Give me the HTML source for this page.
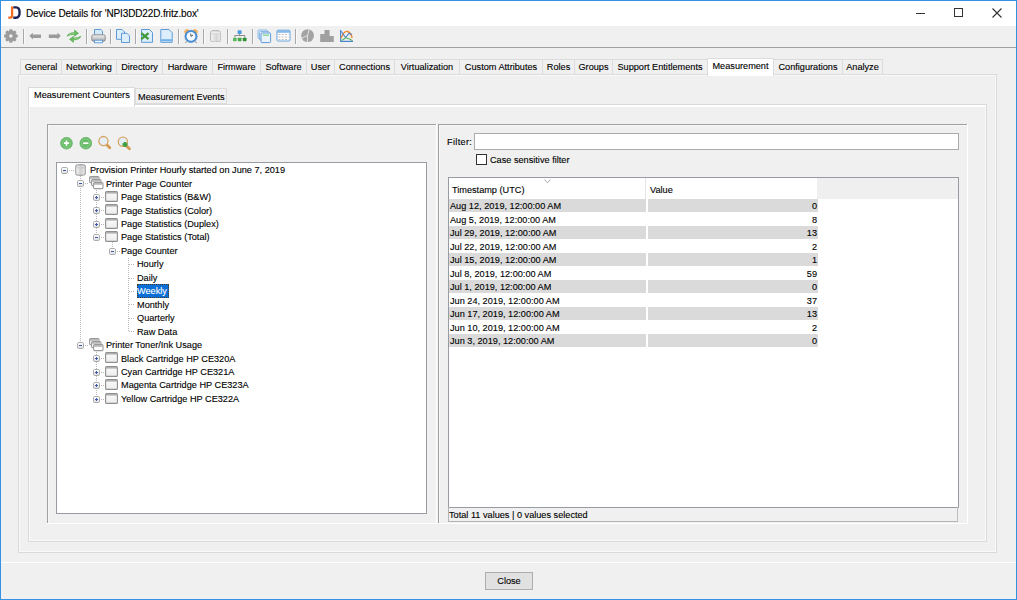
<!DOCTYPE html>
<html><head><meta charset="utf-8"><style>
html,body{margin:0;padding:0;}
body{width:1017px;height:600px;position:relative;overflow:hidden;background:#f0f0f0;font-family:"Liberation Sans", sans-serif;}
div,span,svg{position:absolute;box-sizing:border-box;}
.t{font-size:9.6px;letter-spacing:0px;transform:scaleX(0.955);transform-origin:0 0;line-height:12px;height:12px;white-space:pre;color:#000;-webkit-text-stroke:0.12px;}
.hl{background:#fff;}
.c{transform-origin:50% 0 !important;}
.r{transform-origin:100% 0 !important;}
</style></head><body>

<div style="left:0;top:0;width:1017px;height:600px;border:1px solid #3392e2;"></div>
<div style="left:1px;top:1px;width:1015px;height:25px;background:#fff;"></div>
<svg style="left:7px;top:5px" width="15" height="15" viewBox="0 0 15 15">
<path d="M5.1 1.5 L5.1 10.8 Q5.1 12.6 3.2 12.6 L1.3 12.6" stroke="#f56d1f" stroke-width="2.3" fill="none"/>
<path d="M6.3 2.4 L9 2.4 Q12.6 2.4 12.6 7.6 Q12.6 12.8 9 12.8 L6.3 12.8" stroke="#1c2556" stroke-width="2.4" fill="none"/>
</svg>
<div class="t" style="left:26px;top:8px;font-size:10px;letter-spacing:-0.13px;color:#000;transform:none;">Device Details for 'NPI3DD22D.fritz.box'</div>
<div style="left:916px;top:13px;width:9px;height:1px;background:#333;"></div>
<div style="left:954px;top:8px;width:9px;height:9px;border:1px solid #333;"></div>
<svg style="left:992px;top:8px" width="10" height="10" viewBox="0 0 10 10"><path d="M0.5 0.5 L9.5 9.5 M9.5 0.5 L0.5 9.5" stroke="#333" stroke-width="1.1"/></svg>
<div style="left:1px;top:47px;width:1015px;height:1px;background:#a0a0a0;"></div>
<div style="left:23px;top:29px;width:1px;height:15px;background:#a8a8a8;"></div>
<div style="left:24px;top:29px;width:1px;height:15px;background:#fafafa;"></div>
<div style="left:86px;top:29px;width:1px;height:15px;background:#a8a8a8;"></div>
<div style="left:87px;top:29px;width:1px;height:15px;background:#fafafa;"></div>
<div style="left:110px;top:29px;width:1px;height:15px;background:#a8a8a8;"></div>
<div style="left:111px;top:29px;width:1px;height:15px;background:#fafafa;"></div>
<div style="left:135px;top:29px;width:1px;height:15px;background:#a8a8a8;"></div>
<div style="left:136px;top:29px;width:1px;height:15px;background:#fafafa;"></div>
<div style="left:178px;top:29px;width:1px;height:15px;background:#a8a8a8;"></div>
<div style="left:179px;top:29px;width:1px;height:15px;background:#fafafa;"></div>
<div style="left:203px;top:29px;width:1px;height:15px;background:#a8a8a8;"></div>
<div style="left:204px;top:29px;width:1px;height:15px;background:#fafafa;"></div>
<div style="left:227px;top:29px;width:1px;height:15px;background:#a8a8a8;"></div>
<div style="left:228px;top:29px;width:1px;height:15px;background:#fafafa;"></div>
<div style="left:252px;top:29px;width:1px;height:15px;background:#a8a8a8;"></div>
<div style="left:253px;top:29px;width:1px;height:15px;background:#fafafa;"></div>
<div style="left:295px;top:29px;width:1px;height:15px;background:#a8a8a8;"></div>
<div style="left:296px;top:29px;width:1px;height:15px;background:#fafafa;"></div>
<svg style="left:3px;top:27.7px" width="16" height="16" viewBox="-8 -8 16 16"><g transform="translate(-0.1,0)"><rect x="-1.7" y="-6.8" width="3.4" height="3.6" rx="1.3" transform="rotate(0)" fill="#9b9b9b"/><rect x="-1.7" y="-6.8" width="3.4" height="3.6" rx="1.3" transform="rotate(45)" fill="#9b9b9b"/><rect x="-1.7" y="-6.8" width="3.4" height="3.6" rx="1.3" transform="rotate(90)" fill="#9b9b9b"/><rect x="-1.7" y="-6.8" width="3.4" height="3.6" rx="1.3" transform="rotate(135)" fill="#9b9b9b"/><rect x="-1.7" y="-6.8" width="3.4" height="3.6" rx="1.3" transform="rotate(180)" fill="#9b9b9b"/><rect x="-1.7" y="-6.8" width="3.4" height="3.6" rx="1.3" transform="rotate(225)" fill="#9b9b9b"/><rect x="-1.7" y="-6.8" width="3.4" height="3.6" rx="1.3" transform="rotate(270)" fill="#9b9b9b"/><rect x="-1.7" y="-6.8" width="3.4" height="3.6" rx="1.3" transform="rotate(315)" fill="#9b9b9b"/><circle r="5.1" fill="#9b9b9b"/><circle r="1.7" fill="#f0f0f0"/></g></svg>
<svg style="left:28px;top:31px" width="15" height="10" viewBox="0 0 15 10"><path d="M1.4 4.8 L4.8 1.8 L4.8 3.4 L13 3.4 L13 6.9 L4.8 6.9 L4.8 8.4 Z" fill="#9b9b9b"/></svg>
<svg style="left:47px;top:31px" width="15" height="10" viewBox="0 0 15 10"><path d="M13.8 4.8 L10.4 1.8 L10.4 3.4 L1.8 3.4 L1.8 6.9 L10.4 6.9 L10.4 8.4 Z" fill="#9b9b9b"/></svg>
<svg style="left:66px;top:29px" width="16" height="15" viewBox="0 0 16 15">
<path d="M1 7.2 Q2.5 3.6 8.5 3.6 L8.5 1 L12.6 4.3 L8.5 7.3 L8.5 5.4 Q4.5 5.3 1 7.2 Z" fill="#66b95c" stroke="#4ea64a" stroke-width="0.5"/>
<path d="M15 7.3 Q13.5 10.9 7.5 10.9 L7.5 13.5 L3.4 10.2 L7.5 7.2 L7.5 9.1 Q11.5 9.2 15 7.3 Z" fill="#66b95c" stroke="#4ea64a" stroke-width="0.5"/>
<path d="M3 5.8 Q5 4.5 8.5 4.5 M13 8.7 Q11 10 7.5 10" stroke="#a8dba0" stroke-width="0.6" fill="none"/>
</svg>
<svg style="left:91px;top:28px" width="15" height="16" viewBox="0 0 15 16">
<defs><linearGradient id="prg" x1="0" y1="0" x2="0" y2="1"><stop offset="0" stop-color="#f0f0f0"/><stop offset="0.55" stop-color="#cdcdcd"/><stop offset="1" stop-color="#9a9a9a"/></linearGradient></defs>
<path d="M3.5 7 V1.5 H9.8 L11.5 3.2 V7" fill="#d4e9fa" stroke="#5d9ad6" stroke-width="1"/>
<rect x="0.8" y="6.8" width="13.4" height="6.4" rx="1.6" fill="url(#prg)" stroke="#7a7a7a" stroke-width="0.8"/>
<rect x="3.5" y="12.2" width="8" height="2.6" fill="#e9f3fb" stroke="#5d9ad6" stroke-width="0.9"/>
</svg>
<svg style="left:115px;top:28px" width="16" height="16" viewBox="0 0 16 16">
<path d="M1.5 1.5 H7 L9.5 4 V11.3 H1.5 Z" fill="#dcedfb" stroke="#5d9ad6" stroke-width="1"/>
<path d="M6.5 5.3 H12 L14.5 7.8 V14.5 H6.5 Z" fill="#dcedfb" stroke="#5d9ad6" stroke-width="1"/>
</svg>
<svg style="left:140px;top:28px" width="14" height="16" viewBox="0 0 14 16">
<path d="M1.5 1.5 H9.5 L12.5 4.5 V14.3 H1.5 Z" fill="#dcedfb" stroke="#5d9ad6" stroke-width="1"/>
<path d="M1.3 5.2 L8.5 11.2 M8.5 5.2 L1.3 11.2" stroke="#3f9a3a" stroke-width="2.2"/>
</svg>
<svg style="left:159px;top:28px" width="15" height="16" viewBox="0 0 15 16">
<path d="M1.8 1.5 H10 L13.2 4.7 V14.3 H1.8 Z" fill="#dcedfb" stroke="#5d9ad6" stroke-width="1"/>
<rect x="2.3" y="11.2" width="10.4" height="2" fill="#6fb0ea"/>
</svg>
<svg style="left:183px;top:28px" width="16" height="16" viewBox="0 0 16 16">
<ellipse cx="3.6" cy="3.4" rx="2.6" ry="2.1" transform="rotate(-35 3.6 3.4)" fill="#f0b060"/>
<ellipse cx="12.4" cy="3.4" rx="2.6" ry="2.1" transform="rotate(35 12.4 3.4)" fill="#f0b060"/>
<path d="M3.5 13.5 L2.5 15 M12.5 13.5 L13.5 15" stroke="#999" stroke-width="1.2"/>
<circle cx="8" cy="8.4" r="6.1" fill="#4a90d9" stroke="#3a78c0" stroke-width="0.6"/>
<circle cx="8" cy="8.4" r="4.4" fill="#f4f9ff"/>
<path d="M8 8.4 L7.6 5.6 M8 8.4 L10 7" stroke="#444" stroke-width="0.9"/>
</svg>
<svg style="left:209.6px;top:29.8px" width="11.2" height="12.6" viewBox="0.7 0.9 11.6 13.2" preserveAspectRatio="none">
<defs><linearGradient id="tdb" x1="0" y1="0" x2="1" y2="0"><stop offset="0" stop-color="#f4f4f4"/><stop offset="0.6" stop-color="#d6d6d6"/><stop offset="1" stop-color="#ededed"/></linearGradient></defs>
<path d="M1.2 3.2 Q1.2 1.3 6.5 1.3 Q11.8 1.3 11.8 3.2 V11.8 Q11.8 13.7 6.5 13.7 Q1.2 13.7 1.2 11.8 Z" fill="url(#tdb)" stroke="#b4b4b4" stroke-width="1"/>
<path d="M1.5 3.4 Q1.5 5 6.5 5 Q11.5 5 11.5 3.4" fill="#fafafa" stroke="#c8c8c8" stroke-width="0.8"/>
</svg>
<svg style="left:231px;top:29px" width="17" height="14" viewBox="0 0 17 14">
<rect x="6.6" y="1.2" width="4" height="3.8" rx="0.8" fill="#4a9ae0"/>
<path d="M8.6 5 V6.5 M3.8 8.5 V6.5 H13.8 V8.5" stroke="#8a8a8a" stroke-width="1" fill="none"/>
<rect x="2" y="8.7" width="3.7" height="3.5" rx="0.6" fill="#5cb85c"/>
<rect x="6.8" y="8.7" width="3.7" height="3.5" rx="0.6" fill="#4aa84a"/>
<rect x="11.8" y="8.7" width="3.7" height="3.5" rx="0.6" fill="#2f8f35"/>
</svg>
<svg style="left:257px;top:29px" width="15" height="15" viewBox="0 0 15 15">
<rect x="1" y="1" width="9.5" height="8.5" rx="1" fill="#e4f0fb" stroke="#7fb0e0" stroke-width="0.9"/>
<rect x="2.5" y="2.5" width="9.5" height="8.5" rx="1" fill="#e4f0fb" stroke="#7fb0e0" stroke-width="0.9"/>
<rect x="4" y="4" width="9.6" height="9.6" rx="1" fill="#e9f3fc" stroke="#5d9ad6" stroke-width="1"/>
<rect x="5.8" y="5.6" width="6.2" height="1.2" fill="#7ed07e"/>
</svg>
<svg style="left:276px;top:29px" width="15" height="13" viewBox="0 0 15 13">
<rect x="1" y="1.2" width="13" height="10.8" rx="1" fill="#fff" stroke="#6aa3dc" stroke-width="1"/>
<rect x="1" y="1.2" width="13" height="2.6" fill="#86b9e8"/>
<path d="M2.5 5.5H12.5M2.5 8H12.5M2.5 10.5H12.5" stroke="#c0c0c0" stroke-width="1" stroke-dasharray="2 1.2"/>
</svg>
<svg style="left:300px;top:28px" width="16" height="16" viewBox="0 0 16 16">
<circle cx="7.6" cy="7.6" r="6.4" fill="#a3a3a3"/>
<path d="M7.6 7.6 L9.2 1 M7.6 7.6 L1.6 10.2 M7.6 7.6 L7.4 14.2" stroke="#f0f0f0" stroke-width="0.8"/>
</svg>
<svg style="left:319px;top:29px" width="16" height="14" viewBox="0 0 16 14">
<path d="M1.2 5 H5.5 V1 H10.6 V7 H14.8 V13 H1.2 Z" fill="#a0a0a0"/>
</svg>
<svg style="left:339px;top:29px" width="15" height="14" viewBox="0 0 15 14">
<path d="M1.6 1 V12.4 H14" stroke="#4a86d0" stroke-width="1.1" fill="none"/>
<path d="M2.2 9 Q5 1.5 8.5 2.5 Q12 3.5 13.2 9" stroke="#f08a30" stroke-width="1.4" fill="none"/>
<path d="M2 2 L6.5 8.5 L10 4.5 L13 5.5" stroke="#4a86d0" stroke-width="1.1" fill="none"/>
<path d="M2.5 11.5 L7 8.8 L11 10.2 L13.5 11.8" stroke="#5cb05c" stroke-width="1.1" fill="none"/>
</svg>
<svg style="left:60px;top:137px" width="13" height="13" viewBox="0 0 13 13">
<circle cx="6.5" cy="6.2" r="5.9" fill="#6abc6a" stroke="#58a858" stroke-width="0.6"/>
<circle cx="6.5" cy="6.2" r="4.3" fill="none" stroke="#8fd08f" stroke-width="0.7"/>
<path d="M6.5 3.6V8.8M3.9 6.2H9.1" stroke="#fff" stroke-width="1.7"/>
</svg>
<svg style="left:79px;top:137px" width="13" height="13" viewBox="0 0 13 13">
<circle cx="6.8" cy="6.2" r="5.9" fill="#6abc6a" stroke="#58a858" stroke-width="0.6"/>
<circle cx="6.8" cy="6.2" r="4.3" fill="none" stroke="#8fd08f" stroke-width="0.7"/>
<path d="M4.2 6.2H9.4" stroke="#fff" stroke-width="1.7"/>
</svg>
<svg style="left:97px;top:135px" width="15" height="15" viewBox="0 0 15 15">
<path d="M9.5 9.5 L12.8 12.8" stroke="#d49a50" stroke-width="2.8" stroke-linecap="round"/>
<circle cx="6.4" cy="6.1" r="4.6" fill="#e3eef6" stroke="#d8a462" stroke-width="1.3"/>
</svg>
<svg style="left:116px;top:135px" width="16" height="16" viewBox="0 0 16 16">
<path d="M10 10.5 L13.4 13.8" stroke="#d49a50" stroke-width="2.8" stroke-linecap="round"/>
<circle cx="6.9" cy="6.8" r="4.6" fill="#e3eef6" stroke="#d8a462" stroke-width="1.3"/>
<path d="M9 7 V12 M6.5 9.5 H11.5" stroke="#3f9f3f" stroke-width="2.6"/>
</svg>
<div style="left:18px;top:74px;width:979px;height:479px;border:1px solid #dadada;box-shadow:inset 0 0 0 1px #f9f9f9;"></div>
<div style="left:20px;top:59px;width:42px;height:16px;background:#f0f0f0;border:1px solid #dcdcdc;"></div>
<div class="t c" style="left:20px;top:61px;width:42px;text-align:center;">General</div>
<div style="left:61px;top:59px;width:56px;height:16px;background:#f0f0f0;border:1px solid #dcdcdc;"></div>
<div class="t c" style="left:61px;top:61px;width:56px;text-align:center;">Networking</div>
<div style="left:116px;top:59px;width:47px;height:16px;background:#f0f0f0;border:1px solid #dcdcdc;"></div>
<div class="t c" style="left:116px;top:61px;width:47px;text-align:center;">Directory</div>
<div style="left:162px;top:59px;width:51px;height:16px;background:#f0f0f0;border:1px solid #dcdcdc;"></div>
<div class="t c" style="left:162px;top:61px;width:51px;text-align:center;">Hardware</div>
<div style="left:212px;top:59px;width:49px;height:16px;background:#f0f0f0;border:1px solid #dcdcdc;"></div>
<div class="t c" style="left:212px;top:61px;width:49px;text-align:center;">Firmware</div>
<div style="left:260px;top:59px;width:47px;height:16px;background:#f0f0f0;border:1px solid #dcdcdc;"></div>
<div class="t c" style="left:260px;top:61px;width:47px;text-align:center;">Software</div>
<div style="left:306px;top:59px;width:29px;height:16px;background:#f0f0f0;border:1px solid #dcdcdc;"></div>
<div class="t c" style="left:306px;top:61px;width:29px;text-align:center;">User</div>
<div style="left:334px;top:59px;width:61px;height:16px;background:#f0f0f0;border:1px solid #dcdcdc;"></div>
<div class="t c" style="left:334px;top:61px;width:61px;text-align:center;">Connections</div>
<div style="left:394px;top:59px;width:66px;height:16px;background:#f0f0f0;border:1px solid #dcdcdc;"></div>
<div class="t c" style="left:394px;top:61px;width:66px;text-align:center;">Virtualization</div>
<div style="left:459px;top:59px;width:84px;height:16px;background:#f0f0f0;border:1px solid #dcdcdc;"></div>
<div class="t c" style="left:459px;top:61px;width:84px;text-align:center;">Custom Attributes</div>
<div style="left:542px;top:59px;width:33px;height:16px;background:#f0f0f0;border:1px solid #dcdcdc;"></div>
<div class="t c" style="left:542px;top:61px;width:33px;text-align:center;">Roles</div>
<div style="left:574px;top:59px;width:39px;height:16px;background:#f0f0f0;border:1px solid #dcdcdc;"></div>
<div class="t c" style="left:574px;top:61px;width:39px;text-align:center;">Groups</div>
<div style="left:612px;top:59px;width:96px;height:16px;background:#f0f0f0;border:1px solid #dcdcdc;"></div>
<div class="t c" style="left:612px;top:61px;width:96px;text-align:center;">Support Entitlements</div>
<div style="left:707px;top:58px;width:67px;height:18px;background:#fff;border:1px solid #dcdcdc;border-bottom:none;"></div>
<div class="t c" style="left:707px;top:60px;width:67px;text-align:center;">Measurement</div>
<div style="left:773px;top:59px;width:70px;height:16px;background:#f0f0f0;border:1px solid #dcdcdc;"></div>
<div class="t c" style="left:773px;top:61px;width:70px;text-align:center;">Configurations</div>
<div style="left:842px;top:59px;width:41px;height:16px;background:#f0f0f0;border:1px solid #dcdcdc;"></div>
<div class="t c" style="left:842px;top:61px;width:41px;text-align:center;">Analyze</div>
<div style="left:28px;top:104px;width:959px;height:438px;border:1px solid #dadada;box-shadow:inset 0 0 0 1px #f9f9f9;"></div>
<div style="left:29px;top:105px;width:956px;height:2px;background:#fff;"></div>
<div style="left:28px;top:87px;width:107px;height:20px;background:#fff;border:1px solid #dadada;border-bottom:none;"></div>
<div class="t" style="left:34px;top:89px;">Measurement Counters</div>
<div style="left:135px;top:88px;width:92px;height:16px;background:#f0f0f0;border:1px solid #dcdcdc;"></div>
<div class="t" style="left:138px;top:91px;">Measurement Events</div>
<div style="left:47px;top:124px;width:389px;height:399px;border-top:1px solid #a0a0a0;border-left:1px solid #a0a0a0;"></div>
<div style="left:48px;top:125px;width:388px;height:1px;background:#f7f7f7;"></div>
<div style="left:48px;top:125px;width:1px;height:397px;background:#f7f7f7;"></div>
<div style="left:47px;top:523px;width:390px;height:1px;background:#fff;"></div>
<div style="left:436px;top:124px;width:1px;height:400px;background:#fff;"></div>
<div style="left:438px;top:124px;width:530px;height:399px;border-top:1px solid #a0a0a0;border-left:1px solid #a0a0a0;"></div>
<div style="left:439px;top:125px;width:528px;height:1px;background:#f7f7f7;"></div>
<div style="left:439px;top:125px;width:1px;height:397px;background:#f7f7f7;"></div>
<div style="left:438px;top:523px;width:530px;height:1px;background:#fff;"></div>
<div style="left:967px;top:124px;width:1px;height:400px;background:#fff;"></div>
<div style="left:56px;top:162px;width:371px;height:352px;background:#fff;border:1px solid #989ba1;"></div>
<svg style="left:0;top:0" width="0" height="0"><defs>
<linearGradient id="egr" x1="0" y1="0" x2="0" y2="1"><stop offset="0" stop-color="#ffffff"/><stop offset="1" stop-color="#dcdcdc"/></linearGradient>
<linearGradient id="dbg" x1="0" y1="0" x2="1" y2="0"><stop offset="0" stop-color="#f6f6f6"/><stop offset="0.55" stop-color="#cfcfcf"/><stop offset="1" stop-color="#ececec"/></linearGradient>
<linearGradient id="wng" x1="0" y1="0" x2="0" y2="1"><stop offset="0" stop-color="#fbfbfb"/><stop offset="1" stop-color="#ececec"/></linearGradient>
</defs></svg>
<div style="left:80px;top:176px;width:1px;height:169px;background-image:linear-gradient(to bottom,#bababa 50%,transparent 50%);background-size:1px 2px;"></div>
<div style="left:96px;top:190px;width:1px;height:47px;background-image:linear-gradient(to bottom,#bababa 50%,transparent 50%);background-size:1px 2px;"></div>
<div style="left:112px;top:242px;width:1px;height:6px;background-image:linear-gradient(to bottom,#bababa 50%,transparent 50%);background-size:1px 2px;"></div>
<div style="left:128px;top:258px;width:1px;height:74px;background-image:linear-gradient(to bottom,#bababa 50%,transparent 50%);background-size:1px 2px;"></div>
<div style="left:96px;top:352px;width:1px;height:47px;background-image:linear-gradient(to bottom,#bababa 50%,transparent 50%);background-size:1px 2px;"></div>
<div style="left:69px;top:170px;width:6px;height:1px;background-image:linear-gradient(to right,#bababa 50%,transparent 50%);background-size:2px 1px;"></div>
<svg style="left:61px;top:167px" width="7" height="7" viewBox="0 0 7 7"><rect x="0.5" y="0.5" width="6" height="6" rx="1.2" fill="url(#egr)" stroke="#acacac" stroke-width="1"/><path d="M2 3.5H5" stroke="#3d5aa8" stroke-width="1"/></svg>
<svg style="left:75px;top:164px" width="11" height="12" viewBox="0 0 11 12"><path d="M0.7 2.4 Q0.7 0.6 5.5 0.6 Q10.3 0.6 10.3 2.4 V9.6 Q10.3 11.4 5.5 11.4 Q0.7 11.4 0.7 9.6 Z" fill="url(#dbg)" stroke="#a0a0a0" stroke-width="1.1"/><path d="M1 2.6 Q1 4 5.5 4 Q10 4 10 2.6" fill="none" stroke="#c4c4c4" stroke-width="0.9"/></svg>
<div class="t" style="left:89.5px;top:163.5px;">Provision Printer Hourly started on June 7, 2019</div>
<div style="left:85px;top:183px;width:4px;height:1px;background-image:linear-gradient(to right,#bababa 50%,transparent 50%);background-size:2px 1px;"></div>
<svg style="left:77px;top:180px" width="7" height="7" viewBox="0 0 7 7"><rect x="0.5" y="0.5" width="6" height="6" rx="1.2" fill="url(#egr)" stroke="#acacac" stroke-width="1"/><path d="M2 3.5H5" stroke="#3d5aa8" stroke-width="1"/></svg>
<svg style="left:89px;top:176px" width="15" height="14" viewBox="0 0 15 14"><rect x="0.6" y="0.6" width="9.4" height="6" rx="1" fill="#fff" stroke="#9a9a9a" stroke-width="1.1"/><rect x="1" y="1" width="8.6" height="1.8" fill="#b8b8b8"/><rect x="2.6" y="3.6" width="9.4" height="6" rx="1" fill="#fff" stroke="#9a9a9a" stroke-width="1.1"/><rect x="3" y="4" width="8.6" height="1.8" fill="#b8b8b8"/><rect x="4.6" y="6.6" width="9.4" height="6" rx="1" fill="#fff" stroke="#9a9a9a" stroke-width="1.1"/><rect x="5" y="7" width="8.6" height="1.8" fill="#b8b8b8"/></svg>
<div class="t" style="left:105.5px;top:177.5px;">Printer Page Counter</div>
<div style="left:101px;top:197px;width:4px;height:1px;background-image:linear-gradient(to right,#bababa 50%,transparent 50%);background-size:2px 1px;"></div>
<svg style="left:93px;top:194px" width="7" height="7" viewBox="0 0 7 7"><rect x="0.5" y="0.5" width="6" height="6" rx="1.2" fill="url(#egr)" stroke="#acacac" stroke-width="1"/><path d="M2 3.5H5M3.5 2V5" stroke="#3d5aa8" stroke-width="1"/></svg>
<svg style="left:105px;top:191px" width="13" height="11" viewBox="0 0 13 11"><rect x="0.6" y="0.6" width="11.8" height="9.8" rx="1" fill="url(#wng)" stroke="#8f8f8f" stroke-width="1.1"/><rect x="1" y="1" width="11" height="1.6" fill="#b0b0b0"/></svg>
<div class="t" style="left:121.3px;top:190.5px;">Page Statistics (B&amp;W)</div>
<div style="left:101px;top:210px;width:4px;height:1px;background-image:linear-gradient(to right,#bababa 50%,transparent 50%);background-size:2px 1px;"></div>
<svg style="left:93px;top:207px" width="7" height="7" viewBox="0 0 7 7"><rect x="0.5" y="0.5" width="6" height="6" rx="1.2" fill="url(#egr)" stroke="#acacac" stroke-width="1"/><path d="M2 3.5H5M3.5 2V5" stroke="#3d5aa8" stroke-width="1"/></svg>
<svg style="left:105px;top:204px" width="13" height="11" viewBox="0 0 13 11"><rect x="0.6" y="0.6" width="11.8" height="9.8" rx="1" fill="url(#wng)" stroke="#8f8f8f" stroke-width="1.1"/><rect x="1" y="1" width="11" height="1.6" fill="#b0b0b0"/></svg>
<div class="t" style="left:121.3px;top:204.5px;">Page Statistics (Color)</div>
<div style="left:101px;top:224px;width:4px;height:1px;background-image:linear-gradient(to right,#bababa 50%,transparent 50%);background-size:2px 1px;"></div>
<svg style="left:93px;top:221px" width="7" height="7" viewBox="0 0 7 7"><rect x="0.5" y="0.5" width="6" height="6" rx="1.2" fill="url(#egr)" stroke="#acacac" stroke-width="1"/><path d="M2 3.5H5M3.5 2V5" stroke="#3d5aa8" stroke-width="1"/></svg>
<svg style="left:105px;top:218px" width="13" height="11" viewBox="0 0 13 11"><rect x="0.6" y="0.6" width="11.8" height="9.8" rx="1" fill="url(#wng)" stroke="#8f8f8f" stroke-width="1.1"/><rect x="1" y="1" width="11" height="1.6" fill="#b0b0b0"/></svg>
<div class="t" style="left:121.3px;top:217.5px;">Page Statistics (Duplex)</div>
<div style="left:101px;top:237px;width:4px;height:1px;background-image:linear-gradient(to right,#bababa 50%,transparent 50%);background-size:2px 1px;"></div>
<svg style="left:93px;top:234px" width="7" height="7" viewBox="0 0 7 7"><rect x="0.5" y="0.5" width="6" height="6" rx="1.2" fill="url(#egr)" stroke="#acacac" stroke-width="1"/><path d="M2 3.5H5" stroke="#3d5aa8" stroke-width="1"/></svg>
<svg style="left:105px;top:231px" width="13" height="11" viewBox="0 0 13 11"><rect x="0.6" y="0.6" width="11.8" height="9.8" rx="1" fill="url(#wng)" stroke="#8f8f8f" stroke-width="1.1"/><rect x="1" y="1" width="11" height="1.6" fill="#b0b0b0"/></svg>
<div class="t" style="left:121.3px;top:230.5px;">Page Statistics (Total)</div>
<div style="left:117px;top:251px;width:2.799999999999997px;height:1px;background-image:linear-gradient(to right,#bababa 50%,transparent 50%);background-size:2px 1px;"></div>
<svg style="left:109px;top:248px" width="7" height="7" viewBox="0 0 7 7"><rect x="0.5" y="0.5" width="6" height="6" rx="1.2" fill="url(#egr)" stroke="#acacac" stroke-width="1"/><path d="M2 3.5H5" stroke="#3d5aa8" stroke-width="1"/></svg>
<div class="t" style="left:120.8px;top:244.5px;">Page Counter</div>
<div style="left:129px;top:264px;width:6px;height:1px;background-image:linear-gradient(to right,#bababa 50%,transparent 50%);background-size:2px 1px;"></div>
<div class="t" style="left:136.8px;top:257.5px;">Hourly</div>
<div style="left:129px;top:278px;width:6px;height:1px;background-image:linear-gradient(to right,#bababa 50%,transparent 50%);background-size:2px 1px;"></div>
<div class="t" style="left:136.8px;top:271.5px;">Daily</div>
<div style="left:129px;top:291px;width:6px;height:1px;background-image:linear-gradient(to right,#bababa 50%,transparent 50%);background-size:2px 1px;"></div>
<div style="left:137px;top:284px;width:32px;height:14px;background:#0b6fd8;border:1px dotted #4a3a20;"></div>
<div class="t" style="left:136.8px;top:284.5px;color:#fff;">Weekly</div>
<div style="left:129px;top:304px;width:6px;height:1px;background-image:linear-gradient(to right,#bababa 50%,transparent 50%);background-size:2px 1px;"></div>
<div class="t" style="left:136.8px;top:298.5px;">Monthly</div>
<div style="left:129px;top:318px;width:6px;height:1px;background-image:linear-gradient(to right,#bababa 50%,transparent 50%);background-size:2px 1px;"></div>
<div class="t" style="left:136.8px;top:311.5px;">Quarterly</div>
<div style="left:129px;top:331px;width:6px;height:1px;background-image:linear-gradient(to right,#bababa 50%,transparent 50%);background-size:2px 1px;"></div>
<div class="t" style="left:136.8px;top:325.5px;">Raw Data</div>
<div style="left:85px;top:345px;width:4px;height:1px;background-image:linear-gradient(to right,#bababa 50%,transparent 50%);background-size:2px 1px;"></div>
<svg style="left:77px;top:342px" width="7" height="7" viewBox="0 0 7 7"><rect x="0.5" y="0.5" width="6" height="6" rx="1.2" fill="url(#egr)" stroke="#acacac" stroke-width="1"/><path d="M2 3.5H5" stroke="#3d5aa8" stroke-width="1"/></svg>
<svg style="left:89px;top:338px" width="15" height="14" viewBox="0 0 15 14"><rect x="0.6" y="0.6" width="9.4" height="6" rx="1" fill="#fff" stroke="#9a9a9a" stroke-width="1.1"/><rect x="1" y="1" width="8.6" height="1.8" fill="#b8b8b8"/><rect x="2.6" y="3.6" width="9.4" height="6" rx="1" fill="#fff" stroke="#9a9a9a" stroke-width="1.1"/><rect x="3" y="4" width="8.6" height="1.8" fill="#b8b8b8"/><rect x="4.6" y="6.6" width="9.4" height="6" rx="1" fill="#fff" stroke="#9a9a9a" stroke-width="1.1"/><rect x="5" y="7" width="8.6" height="1.8" fill="#b8b8b8"/></svg>
<div class="t" style="left:105.5px;top:338.5px;">Printer Toner/Ink Usage</div>
<div style="left:101px;top:358px;width:4px;height:1px;background-image:linear-gradient(to right,#bababa 50%,transparent 50%);background-size:2px 1px;"></div>
<svg style="left:93px;top:355px" width="7" height="7" viewBox="0 0 7 7"><rect x="0.5" y="0.5" width="6" height="6" rx="1.2" fill="url(#egr)" stroke="#acacac" stroke-width="1"/><path d="M2 3.5H5M3.5 2V5" stroke="#3d5aa8" stroke-width="1"/></svg>
<svg style="left:105px;top:352px" width="13" height="11" viewBox="0 0 13 11"><rect x="0.6" y="0.6" width="11.8" height="9.8" rx="1" fill="url(#wng)" stroke="#8f8f8f" stroke-width="1.1"/><rect x="1" y="1" width="11" height="1.6" fill="#b0b0b0"/></svg>
<div class="t" style="left:121.3px;top:352.5px;">Black Cartridge HP CE320A</div>
<div style="left:101px;top:372px;width:4px;height:1px;background-image:linear-gradient(to right,#bababa 50%,transparent 50%);background-size:2px 1px;"></div>
<svg style="left:93px;top:369px" width="7" height="7" viewBox="0 0 7 7"><rect x="0.5" y="0.5" width="6" height="6" rx="1.2" fill="url(#egr)" stroke="#acacac" stroke-width="1"/><path d="M2 3.5H5M3.5 2V5" stroke="#3d5aa8" stroke-width="1"/></svg>
<svg style="left:105px;top:366px" width="13" height="11" viewBox="0 0 13 11"><rect x="0.6" y="0.6" width="11.8" height="9.8" rx="1" fill="url(#wng)" stroke="#8f8f8f" stroke-width="1.1"/><rect x="1" y="1" width="11" height="1.6" fill="#b0b0b0"/></svg>
<div class="t" style="left:121.3px;top:365.5px;">Cyan Cartridge HP CE321A</div>
<div style="left:101px;top:385px;width:4px;height:1px;background-image:linear-gradient(to right,#bababa 50%,transparent 50%);background-size:2px 1px;"></div>
<svg style="left:93px;top:382px" width="7" height="7" viewBox="0 0 7 7"><rect x="0.5" y="0.5" width="6" height="6" rx="1.2" fill="url(#egr)" stroke="#acacac" stroke-width="1"/><path d="M2 3.5H5M3.5 2V5" stroke="#3d5aa8" stroke-width="1"/></svg>
<svg style="left:105px;top:379px" width="13" height="11" viewBox="0 0 13 11"><rect x="0.6" y="0.6" width="11.8" height="9.8" rx="1" fill="url(#wng)" stroke="#8f8f8f" stroke-width="1.1"/><rect x="1" y="1" width="11" height="1.6" fill="#b0b0b0"/></svg>
<div class="t" style="left:121.3px;top:378.5px;">Magenta Cartridge HP CE323A</div>
<div style="left:101px;top:399px;width:4px;height:1px;background-image:linear-gradient(to right,#bababa 50%,transparent 50%);background-size:2px 1px;"></div>
<svg style="left:93px;top:396px" width="7" height="7" viewBox="0 0 7 7"><rect x="0.5" y="0.5" width="6" height="6" rx="1.2" fill="url(#egr)" stroke="#acacac" stroke-width="1"/><path d="M2 3.5H5M3.5 2V5" stroke="#3d5aa8" stroke-width="1"/></svg>
<svg style="left:105px;top:393px" width="13" height="11" viewBox="0 0 13 11"><rect x="0.6" y="0.6" width="11.8" height="9.8" rx="1" fill="url(#wng)" stroke="#8f8f8f" stroke-width="1.1"/><rect x="1" y="1" width="11" height="1.6" fill="#b0b0b0"/></svg>
<div class="t" style="left:121.3px;top:392.5px;">Yellow Cartridge HP CE322A</div>
<div class="t" style="left:447px;top:136px;letter-spacing:0.35px;">Filter:</div>
<div style="left:474px;top:133px;width:485px;height:17px;background:#fff;border:1px solid #a9abaf;"></div>
<div style="left:476px;top:154px;width:11px;height:11px;background:#fff;border:1px solid #333;"></div>
<div class="t" style="left:490px;top:154px;">Case sensitive filter</div>
<div style="left:448px;top:177px;width:511px;height:331px;background:#fff;border:1px solid #989ba1;"></div>
<div style="left:817px;top:178px;width:141px;height:21px;background:#efefef;"></div>
<div style="left:645px;top:178px;width:1px;height:21px;background:#e5e5e5;"></div>
<div class="t" style="left:452px;top:184px;">Timestamp (UTC)</div>
<div class="t" style="left:650px;top:184px;">Value</div>
<svg style="left:543px;top:179px" width="9" height="5" viewBox="0 0 9 5"><path d="M1.5 0.8 L4.5 3.6 L7.5 0.8" stroke="#8c8c8c" stroke-width="0.8" fill="none"/></svg>
<div style="left:449px;top:199px;width:197px;height:13px;background:#dadada;"></div>
<div style="left:648px;top:199px;width:170px;height:13px;background:#dadada;"></div>
<div class="t" style="left:450px;top:200px;">Aug 12, 2019, 12:00:00 AM</div>
<div class="t r" style="left:700px;top:200px;width:117px;text-align:right;">0</div>
<div class="t" style="left:450px;top:214px;">Aug 5, 2019, 12:00:00 AM</div>
<div class="t r" style="left:700px;top:214px;width:117px;text-align:right;">8</div>
<div style="left:449px;top:226px;width:197px;height:13px;background:#dadada;"></div>
<div style="left:648px;top:226px;width:170px;height:13px;background:#dadada;"></div>
<div class="t" style="left:450px;top:227px;">Jul 29, 2019, 12:00:00 AM</div>
<div class="t r" style="left:700px;top:227px;width:117px;text-align:right;">13</div>
<div class="t" style="left:450px;top:241px;">Jul 22, 2019, 12:00:00 AM</div>
<div class="t r" style="left:700px;top:241px;width:117px;text-align:right;">2</div>
<div style="left:449px;top:253px;width:197px;height:13px;background:#dadada;"></div>
<div style="left:648px;top:253px;width:170px;height:13px;background:#dadada;"></div>
<div class="t" style="left:450px;top:254px;">Jul 15, 2019, 12:00:00 AM</div>
<div class="t r" style="left:700px;top:254px;width:117px;text-align:right;">1</div>
<div class="t" style="left:450px;top:268px;">Jul 8, 2019, 12:00:00 AM</div>
<div class="t r" style="left:700px;top:268px;width:117px;text-align:right;">59</div>
<div style="left:449px;top:280px;width:197px;height:13px;background:#dadada;"></div>
<div style="left:648px;top:280px;width:170px;height:13px;background:#dadada;"></div>
<div class="t" style="left:450px;top:281px;">Jul 1, 2019, 12:00:00 AM</div>
<div class="t r" style="left:700px;top:281px;width:117px;text-align:right;">0</div>
<div class="t" style="left:450px;top:295px;">Jun 24, 2019, 12:00:00 AM</div>
<div class="t r" style="left:700px;top:295px;width:117px;text-align:right;">37</div>
<div style="left:449px;top:307px;width:197px;height:13px;background:#dadada;"></div>
<div style="left:648px;top:307px;width:170px;height:13px;background:#dadada;"></div>
<div class="t" style="left:450px;top:308px;">Jun 17, 2019, 12:00:00 AM</div>
<div class="t r" style="left:700px;top:308px;width:117px;text-align:right;">13</div>
<div class="t" style="left:450px;top:322px;">Jun 10, 2019, 12:00:00 AM</div>
<div class="t r" style="left:700px;top:322px;width:117px;text-align:right;">2</div>
<div style="left:449px;top:334px;width:197px;height:13px;background:#dadada;"></div>
<div style="left:648px;top:334px;width:170px;height:13px;background:#dadada;"></div>
<div class="t" style="left:450px;top:335px;">Jun 3, 2019, 12:00:00 AM</div>
<div class="t r" style="left:700px;top:335px;width:117px;text-align:right;">0</div>
<div style="left:448px;top:507px;width:510px;height:15px;border-left:1px solid #b4b4b4;border-bottom:1px solid #b4b4b4;border-right:1px solid #bcbcbc;"></div>
<div class="t" style="left:449px;top:509px;">Total 11 values | 0 values selected</div>
<div style="left:1px;top:562px;width:1015px;height:1px;background:#fff;"></div>
<div style="left:485px;top:572px;width:48px;height:18px;background:#e1e1e1;border:1px solid #adadad;"></div>
<div class="t c" style="left:485px;top:575px;width:48px;text-align:center;">Close</div>
</body></html>
